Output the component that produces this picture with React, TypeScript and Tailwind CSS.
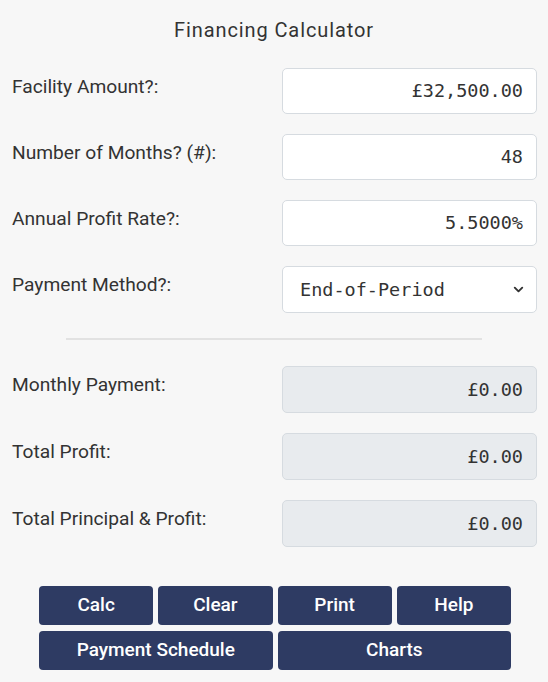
import { ChevronDown } from 'lucide-react';

const inputs = [
    { label: "Facility Amount?:", value: "£32,500.00" },
    { label: "Number of Months? (#):", value: "48" },
    { label: "Annual Profit Rate?:", value: "5.5000%" },
];

const results = [
    { label: "Monthly Payment:", value: "£0.00" },
    { label: "Total Profit:", value: "£0.00" },
    { label: "Total Principal & Profit:", value: "£0.00" },
];

const mono = "font-['DejaVu_Sans_Mono',monospace]";

export default function App() {
    return (
        <div className="bg-[#f7f7f7] min-h-[682px] w-[548px] font-['Roboto',sans-serif] text-[#333]">
            <div className="pt-[17px] text-center text-[20px] leading-[26px] tracking-[0.9px]">Financing Calculator</div>

            <div className="flex flex-col gap-5 mt-[25px] pl-3 pr-[11px]">
                {inputs.map((row) => (
                    <div key={row.label} className="flex items-center">
                        <span className="flex-1 text-[19.2px] pb-2">{row.label}</span>
                        <div className={`w-[255px] h-[46px] bg-white border border-[#d6dbe0] rounded-[5px] flex items-center justify-end pr-[13px] text-[18.5px] ${mono}`}>
                            {row.value}
                        </div>
                    </div>
                ))}
                <div className="flex items-center">
                    <span className="flex-1 text-[19.2px] pb-2">Payment Method?:</span>
                    <div className={`w-[255px] h-[47px] bg-white border border-[#d6dbe0] rounded-[5px] flex items-center justify-between pl-[17px] pr-[10px] text-[18.5px] ${mono}`}>
                        <span>End-of-Period</span>
                        <ChevronDown size={15} strokeWidth={3} />
                    </div>
                </div>
            </div>

            <div className="mx-[66px] mt-[25px] h-[2px] bg-[#e2e2e2]" />

            <div className="flex flex-col gap-5 mt-[26px] pl-3 pr-[11px]">
                {results.map((row) => (
                    <div key={row.label} className="flex items-center">
                        <span className="flex-1 text-[19.2px] pb-2">{row.label}</span>
                        <div className={`w-[255px] h-[47px] bg-[#e8ebee] border border-[#d6dbe0] rounded-[5px] flex items-center justify-end pr-[13px] text-[18.5px] ${mono}`}>
                            {row.value}
                        </div>
                    </div>
                ))}
            </div>

            <div className="mx-[39px] mt-[39px] grid grid-cols-4 gap-x-[5px] gap-y-[6px] w-[472px]">
                {["Calc", "Clear", "Print", "Help"].map((b) => (
                    <button key={b} className="h-[39px] bg-[#2e3b63] text-white rounded-[4px] text-[19px] font-medium">{b}</button>
                ))}
                <button className="col-span-2 h-[39px] bg-[#2e3b63] text-white rounded-[4px] text-[19px] font-medium">Payment Schedule</button>
                <button className="col-span-2 h-[39px] bg-[#2e3b63] text-white rounded-[4px] text-[19px] font-medium">Charts</button>
            </div>
        </div>
    )
}
